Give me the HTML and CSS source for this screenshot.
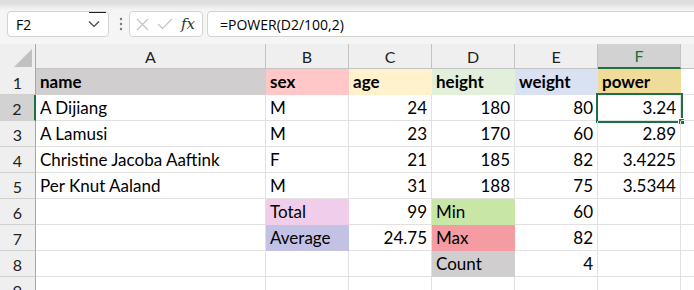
FILE: index.html
```html
<!DOCTYPE html>
<html lang="en">
<head>
  <meta charset="UTF-8" />
  <title>Sheet</title>
  <link rel="stylesheet" href="styles.css">
</head>
<body>
  <div class="toolbar">
    <div class="namebox">
      <span>F2</span>
      <svg class="chevron" width="12" height="8" viewBox="0 0 12 8"><path d="M1 1.5 L6 6.5 L11 1.5" fill="none" stroke="#444" stroke-width="1.2"/></svg>
      <span class="caret"></span>
    </div>
    <svg class="dots" width="4" height="14" viewBox="0 0 4 14"><circle cx="2" cy="2" r="1.2" fill="#777"/><circle cx="2" cy="7" r="1.2" fill="#777"/><circle cx="2" cy="12" r="1.2" fill="#777"/></svg>
    <div class="fx-box">
      <svg width="13" height="13" viewBox="0 0 13 13"><path d="M1 1 L12 12 M12 1 L1 12" stroke="#c4c4c4" stroke-width="1.2"/></svg>
      <svg width="16" height="12" viewBox="0 0 16 12"><path d="M1 6 L5.5 10.5 L15 1" fill="none" stroke="#c4c4c4" stroke-width="1.2"/></svg>
      <span class="fx">fx</span>
    </div>
    <div class="formula">=POWER(D2/100,2)</div>
  </div>

  <div class="sheet">
    <div class="corner"><span class="tri"></span></div>
    <div class="col-head">A</div>
    <div class="col-head">B</div>
    <div class="col-head">C</div>
    <div class="col-head">D</div>
    <div class="col-head">E</div>
    <div class="col-head active">F</div>
    <div class="col-head rest"></div>

    <div class="row-head">1</div>
    <div class="cell bold fill-gray">name</div>
    <div class="cell bold fill-pink">sex</div>
    <div class="cell bold fill-yellow">age</div>
    <div class="cell bold fill-green">height</div>
    <div class="cell bold fill-blue">weight</div>
    <div class="cell bold fill-gold">power</div>
    <div class="cell rest"></div>

    <div class="row-head active">2</div>
    <div class="cell">A Dijiang</div>
    <div class="cell">M</div>
    <div class="cell num">24</div>
    <div class="cell num">180</div>
    <div class="cell num">80</div>
    <div class="cell num selected">3.24<span class="handle"></span></div>
    <div class="cell rest"></div>

    <div class="row-head">3</div>
    <div class="cell">A Lamusi</div>
    <div class="cell">M</div>
    <div class="cell num">23</div>
    <div class="cell num">170</div>
    <div class="cell num">60</div>
    <div class="cell num">2.89</div>
    <div class="cell rest"></div>

    <div class="row-head">4</div>
    <div class="cell">Christine Jacoba Aaftink</div>
    <div class="cell">F</div>
    <div class="cell num">21</div>
    <div class="cell num">185</div>
    <div class="cell num">82</div>
    <div class="cell num">3.4225</div>
    <div class="cell rest"></div>

    <div class="row-head">5</div>
    <div class="cell">Per Knut Aaland</div>
    <div class="cell">M</div>
    <div class="cell num">31</div>
    <div class="cell num">188</div>
    <div class="cell num">75</div>
    <div class="cell num">3.5344</div>
    <div class="cell rest"></div>

    <div class="row-head">6</div>
    <div class="cell"></div>
    <div class="cell fill-lilac">Total</div>
    <div class="cell num">99</div>
    <div class="cell fill-lime">Min</div>
    <div class="cell num">60</div>
    <div class="cell"></div>
    <div class="cell rest"></div>

    <div class="row-head">7</div>
    <div class="cell"></div>
    <div class="cell fill-violet">Average</div>
    <div class="cell num">24.75</div>
    <div class="cell fill-rose">Max</div>
    <div class="cell num">82</div>
    <div class="cell"></div>
    <div class="cell rest"></div>

    <div class="row-head">8</div>
    <div class="cell"></div>
    <div class="cell"></div>
    <div class="cell"></div>
    <div class="cell fill-gray">Count</div>
    <div class="cell num">4</div>
    <div class="cell"></div>
    <div class="cell rest"></div>

    <div class="row-head">9</div>
    <div class="cell"></div>
    <div class="cell"></div>
    <div class="cell"></div>
    <div class="cell"></div>
    <div class="cell"></div>
    <div class="cell"></div>
    <div class="cell rest"></div>
  </div>
</body>
</html>
```

FILE: styles.css
```css
* {
  box-sizing: border-box;
  margin: 0;
  padding: 0;
}

body {
  width: 694px;
  height: 290px;
  overflow: hidden;
  background: #f3f3f3;
  font-family: Lato, 'Liberation Sans', sans-serif;
  color: #000;
}

.toolbar {
  height: 44px;
  padding-top: 11px;
  display: flex;
  align-items: flex-start;
  background: linear-gradient(#dedede 0, #dedede 3px, #f5f5f5 10px);
  font-family: 'Open Sans', 'Noto Sans', sans-serif;
  font-size: 14px;
}

.namebox {
  position: relative;
  flex: none;
  width: 102px;
  height: 26px;
  margin-left: 7px;
  padding: 0 8px;
  display: flex;
  align-items: center;
  justify-content: space-between;
  background: #fff;
  border: 1px solid #d4d4d4;
  border-radius: 4px;
}

.caret {
  position: absolute;
  top: 0;
  right: 2px;
  width: 17px;
  height: 1px;
  background: #222;
}

.dots {
  flex: none;
  margin: 6px 6px 0 10px;
}

.fx-box {
  flex: none;
  width: 74px;
  height: 26px;
  padding: 0 0 0 6px;
  display: flex;
  align-items: center;
  gap: 8px;
  background: #fff;
  border: 1px solid #d4d4d4;
  border-radius: 4px;
}

.fx {
  font-family: 'DejaVu Serif', 'Liberation Serif', serif;
  font-style: italic;
  font-size: 15px;
  color: #333;
}

.formula {
  flex: none;
  width: 520px;
  height: 26px;
  margin-left: 4px;
  padding-left: 12px;
  display: flex;
  align-items: center;
  background: #fff;
  border: 1px solid #d4d4d4;
  border-radius: 4px;
}

.sheet {
  display: grid;
  grid-template-columns: 36px 230px repeat(5, 83px) 1fr;
  grid-template-rows: 25px repeat(9, 26px);
  background: #fff;
}

.corner,
.col-head,
.row-head {
  background: #efefef;
  color: #222;
  font-size: 16px;
}

.corner {
  position: relative;
  border-right: 1px solid #a8a8a8;
}

.tri {
  position: absolute;
  right: 3px;
  bottom: 2px;
  width: 0;
  height: 0;
  border-left: 18px solid transparent;
  border-bottom: 18px solid #c1c1c1;
}

.col-head {
  display: flex;
  align-items: center;
  justify-content: center;
  border-right: 1px solid #c4c4c4;
  border-bottom: 1px solid #c4c4c4;
}

.col-head.active {
  background: #d2d2d2;
  color: #1e6c41;
  border-bottom: 2px solid #1e7145;
}

.col-head.rest {
  border-right: none;
}

.row-head {
  display: flex;
  align-items: center;
  justify-content: center;
  padding-top: 2px;
  border-right: 1px solid #a8a8a8;
  border-bottom: 1px solid #d0d0d0;
}

.row-head.active {
  background: #d2d2d2;
  border-right: 2px solid #1e7145;
}

.cell {
  position: relative;
  display: flex;
  align-items: flex-end;
  padding: 0 4px 2px 4px;
  font-size: 17px;
  line-height: 20px;
  white-space: nowrap;
  border-right: 1px solid #e1e1e1;
  border-bottom: 1px solid #e1e1e1;
}

.cell.num {
  justify-content: flex-end;
}

.cell.bold {
  font-weight: bold;
}

.cell.rest {
  border-right: none;
}

.selected {
  outline: 2px solid #1e7145;
  outline-offset: 0;
}

.handle {
  position: absolute;
  right: -5px;
  bottom: -5px;
  width: 7px;
  height: 7px;
  background: #1e7145;
  border: 1px solid #fff;
}

.fill-gray   { background: #d0cece; border-color: #d0cece; }
.fill-pink   { background: #ffc7c7; border-color: #ffc7c7; }
.fill-yellow { background: #fff2cc; border-color: #fff2cc; }
.fill-green  { background: #e2efda; border-color: #e2efda; }
.fill-blue   { background: #d9e1f2; border-color: #d9e1f2; }
.fill-gold   { background: #efdc98; border-color: #efdc98; }
.fill-lilac  { background: #f0cdea; border-color: #f0cdea; }
.fill-violet { background: #c3c2e4; border-color: #c3c2e4; }
.fill-lime   { background: #c8e6a5; border-color: #c8e6a5; }
.fill-rose   { background: #f59ca3; border-color: #f59ca3; }
```
